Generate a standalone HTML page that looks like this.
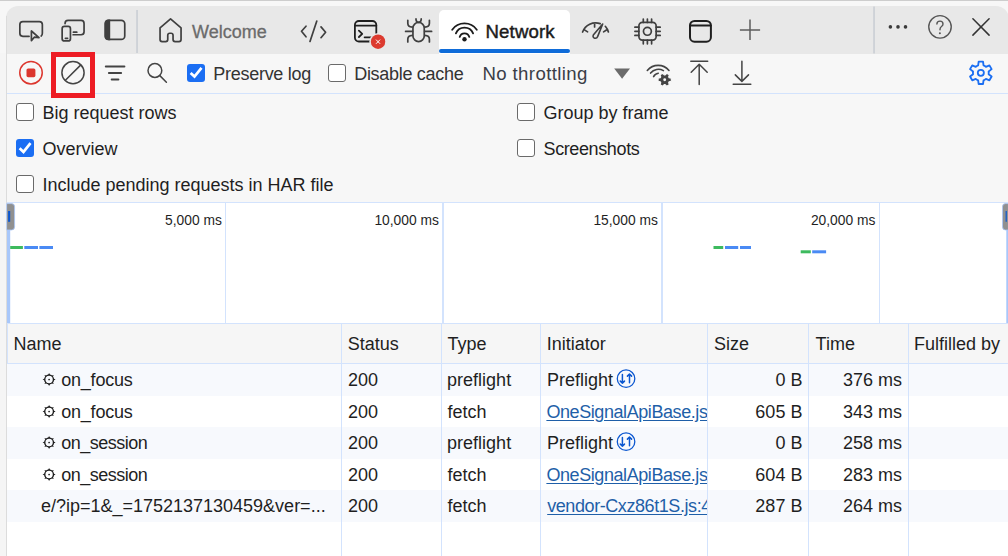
<!DOCTYPE html>
<html><head><meta charset="utf-8">
<style>
*{box-sizing:border-box;margin:0;padding:0}
html,body{width:1008px;height:556px;overflow:hidden;background:#f7f7f7;font-family:"Liberation Sans",sans-serif;position:relative}
.a{position:absolute}
#topline{left:0;top:0;width:1008px;height:1px;background:#cdcdcd}
#gutter{left:0;top:53px;width:7px;height:503px;background:#f5f5f5}
#gshadow{left:5.7px;top:16px;width:1.3px;height:540px;background:#dcdcdc}
#tabbar{left:6.3px;top:6.1px;width:1003px;height:47.5px;background:#e8e8e8;border-radius:12px 13px 0 0}
#nettab{left:439px;top:10px;width:131px;height:43.6px;background:#fff;border-radius:5px 5px 0 0}
#netline{left:439px;top:49px;width:131px;height:3.5px;background:#0f6cd9;border-radius:2px}
#toolbar{left:7px;top:53.6px;width:1001px;height:40.4px;background:#f7f7f7;border-bottom:1px solid #d3e3fd}
#settings{left:7px;top:94px;width:1001px;height:108px;background:#f7f7f7}
#overview{left:7px;top:202px;width:1001px;height:122px;background:#fff;border-top:1px solid #d3e3fd;border-bottom:1px solid #d3e3fd}
#header{left:7px;top:323px;width:1001px;height:41px;background:#f6f6f6;border-top:1px solid #d3e3fd;border-bottom:1px solid #d3e3fd;border-left:1px solid #d3e3fd}
#tbody{left:7px;top:364px;width:1001px;height:192px;background:#fff}
.row{position:absolute;left:7px;width:1001px;height:31.5px}
.odd{background:#f7f9fd}
.t{position:absolute;white-space:nowrap;font-size:18px;line-height:20px;color:#1f1f1f}
.sm{font-size:13.8px;line-height:15px}
.r{text-align:right}
.lnk{color:#1f5fa8;text-decoration:underline;text-underline-offset:2px;letter-spacing:-0.42px}
.cb{position:absolute;width:18px;height:18px;border-radius:3px}
.off{border:1.8px solid #6a6a6a;background:#fff}
.on{background:#1b6ef3}
#ov{position:absolute;left:0;top:0}
</style></head><body>
<div class="a" id="topline"></div>
<div class="a" id="tabbar"></div>
<div class="a" id="nettab"></div>
<div class="a" id="netline"></div>
<div class="a" id="gutter"></div>
<div class="a" id="gshadow"></div>
<div class="a" id="toolbar"></div>
<div class="a" id="settings"></div>
<div class="a" id="overview"></div>
<div class="a" id="header"></div>
<div class="a" id="tbody"></div>
<div class="row odd" style="top:364px;height:32px"></div>
<div class="row odd" style="top:427px;height:31.7px"></div>
<div class="row odd" style="top:490px;height:31.6px"></div>

<!-- tab texts -->
<div class="t" style="left:192px;top:21.8px;color:#6b6b6b;font-size:18px;-webkit-text-stroke:0.3px #6b6b6b">Welcome</div>
<div class="t" style="left:485.5px;top:21.5px;color:#1b1b1b;font-size:18.6px;-webkit-text-stroke:0.45px #1b1b1b;letter-spacing:0.15px">Network</div>

<!-- toolbar texts -->
<div class="cb on" style="left:187px;top:64px"></div>
<div class="t" style="left:213.3px;top:63.75px;color:#333;letter-spacing:-0.28px">Preserve log</div>
<div class="cb off" style="left:328px;top:64.2px"></div>
<div class="t" style="left:354.2px;top:63.75px;color:#333;letter-spacing:-0.3px">Disable cache</div>
<div class="t" style="left:482.4px;top:63.75px;color:#3a3d47;font-size:18.6px;letter-spacing:0.4px">No throttling</div>

<!-- settings -->
<div class="cb off" style="left:16px;top:103.3px"></div>
<div class="t" style="left:42.4px;top:103px">Big request rows</div>
<div class="cb on" style="left:16px;top:139.3px"></div>
<div class="t" style="left:42.4px;top:139px">Overview</div>
<div class="cb off" style="left:16px;top:175.3px"></div>
<div class="t" style="left:42.4px;top:175px">Include pending requests in HAR file</div>
<div class="cb off" style="left:516.8px;top:103.3px"></div>
<div class="t" style="left:543.5px;top:103px">Group by frame</div>
<div class="cb off" style="left:516.8px;top:139.3px"></div>
<div class="t" style="left:543.5px;top:139px;letter-spacing:-0.38px">Screenshots</div>

<!-- overview labels -->
<div class="t sm r" style="right:786.2px;top:213.1px">5,000 ms</div>
<div class="t sm r" style="right:569.2px;top:213.1px">10,000 ms</div>
<div class="t sm r" style="right:350.2px;top:213.1px">15,000 ms</div>
<div class="t sm r" style="right:132.7px;top:213.1px">20,000 ms</div>

<!-- header -->
<div class="t" style="left:13.5px;top:333.5px">Name</div>
<div class="t" style="left:347.8px;top:333.5px">Status</div>
<div class="t" style="left:447.6px;top:333.5px">Type</div>
<div class="t" style="left:546.7px;top:333.5px">Initiator</div>
<div class="t" style="left:713.9px;top:333.5px">Size</div>
<div class="t" style="left:815.6px;top:333.5px">Time</div>
<div class="t" style="left:914px;top:333.5px">Fulfilled by</div>

<!-- rows -->
<div class="t" style="left:61.2px;top:369.6px"><span style="letter-spacing:-0.2px">on_focus</span></div>
<div class="t" style="left:61.2px;top:402.1px"><span style="letter-spacing:-0.2px">on_focus</span></div>
<div class="t" style="left:61.2px;top:432.6px"><span style="letter-spacing:-0.5px">on_session</span></div>
<div class="t" style="left:61.2px;top:465.1px"><span style="letter-spacing:-0.5px">on_session</span></div>
<div class="t" style="left:40.9px;top:495.6px">e/?ip=1&amp;_=1752137130459&amp;ver=...</div>

<div class="t" style="left:348px;top:369.6px">200</div>
<div class="t" style="left:348px;top:402.1px">200</div>
<div class="t" style="left:348px;top:432.6px">200</div>
<div class="t" style="left:348px;top:465.1px">200</div>
<div class="t" style="left:348px;top:495.6px">200</div>

<div class="t" style="left:447.1px;top:369.6px">preflight</div>
<div class="t" style="left:447.6px;top:402.1px">fetch</div>
<div class="t" style="left:447.1px;top:432.6px">preflight</div>
<div class="t" style="left:447.6px;top:465.1px">fetch</div>
<div class="t" style="left:447.6px;top:495.6px">fetch</div>

<div class="a" style="left:540px;top:363px;width:167.5px;height:193px;overflow:hidden">
<div class="t" style="left:7px;top:6.6px">Preflight</div>
<div class="t lnk" style="left:6.4px;top:39.1px">OneSignalApiBase.js:1</div>
<div class="t" style="left:7px;top:69.6px">Preflight</div>
<div class="t lnk" style="left:6.4px;top:102.1px">OneSignalApiBase.js:1</div>
<div class="t lnk" style="left:7.2px;top:132.6px">vendor-Cxz86t1S.js:4</div>
</div>

<div class="t r" style="right:205.6px;top:369.6px">0 B</div>
<div class="t r" style="right:205.6px;top:402.1px">605 B</div>
<div class="t r" style="right:205.6px;top:432.6px">0 B</div>
<div class="t r" style="right:205.6px;top:465.1px">604 B</div>
<div class="t r" style="right:205.6px;top:495.6px">287 B</div>

<div class="t r" style="right:106.1px;top:369.6px">376 ms</div>
<div class="t r" style="right:106.1px;top:402.1px">343 ms</div>
<div class="t r" style="right:106.1px;top:432.6px">258 ms</div>
<div class="t r" style="right:106.1px;top:465.1px">283 ms</div>
<div class="t r" style="right:106.1px;top:495.6px">264 ms</div>
<svg id="ov" width="1008" height="556" viewBox="0 0 1008 556" fill="none" stroke-linecap="round" stroke-linejoin="round">
<rect x="136.3" y="10" width="1.5" height="43" fill="#c8ccd3" stroke="none"/>
<rect x="873.3" y="6.5" width="1.5" height="47" fill="#c8ccd3" stroke="none"/>
<path stroke="#3f3f3f" stroke-width="1.7" d="M 29.1 36.35 H 22.85 Q 19.85 36.35 19.85 33.35 V 24.6 Q 19.85 21.6 22.85 21.6 H 39.35 Q 42.35 21.6 42.35 24.6 V 33.35 Q 42.35 35.3 41.2 36"/>
<path stroke="#3f3f3f" stroke-width="1.7" d="M 31.4 31 L 31.4 40.6 L 34.3 37.2 L 39 37.6 Z"/>
<path stroke="#3f3f3f" stroke-width="1.7" d="M 65.05 23.6 V 23.45 Q 65.05 20.45 68.05 20.45 H 81.05 Q 84.05 20.45 84.05 23.45 V 31.75 Q 84.05 34.75 81.05 34.75 H 73.1"/>
<path stroke="#3f3f3f" stroke-width="1.7" d="M 73.4 32.15 H 76.8 M 65.4 38.3 H 67.6"/>
<rect stroke="#3f3f3f" stroke-width="1.7" x="62.15" y="26.45" width="8.3" height="14.5" rx="2.3"/>
<rect stroke="#3f3f3f" stroke-width="1.7" x="105.35" y="20.35" width="19.4" height="19.1" rx="3.5"/>
<path fill="#3f3f3f" d="M 104.5 23.5 Q 104.5 19.5 108.5 19.5 H 110.2 V 40.3 H 108.5 Q 104.5 40.3 104.5 36.3 Z"/>
<path stroke="#3f3f3f" stroke-width="1.7" d="M 160.05 27.8 L 170.55 18.9 L 181.05 27.8 V 39.6 Q 181.05 41.6 179.05 41.6 H 175.05 Q 173.05 41.6 173.05 39.6 V 35.3 Q 173.05 33.25 171.05 33.25 H 169.75 Q 167.75 33.25 167.75 35.3 V 39.6 Q 167.75 41.6 165.75 41.6 H 162.05 Q 160.05 41.6 160.05 39.6 Z"/>
<path stroke="#3f3f3f" stroke-width="1.7" d="M 306 26.2 L 301.5 31.3 L 306 36.8 M 316.8 21.1 L 310 41.4 M 321 26.9 L 325.6 32.3 L 321 37.7"/>
<rect stroke="#1f1f1f" stroke-width="1.8" x="354.9" y="21" width="21.4" height="20.5" rx="4"/>
<path stroke="#1f1f1f" stroke-width="1.8" d="M 354.9 25.6 H 376.3 M 358.9 30.6 L 362.2 33.8 L 358.9 37 M 364.6 37.3 H 372"/>
<circle cx="378.06" cy="41.7" r="8.8" fill="#e8e8e8" stroke="none"/>
<circle cx="378.06" cy="41.7" r="7.2" fill="#dc3a2f" stroke="none"/>
<path stroke="#fff" stroke-width="1.0" stroke-linecap="butt" d="M 376 39.6 L 380.1 43.8 M 380.1 39.6 L 376 43.8"/>
<path stroke="#3f3f3f" stroke-width="1.7" d="M 412.95 28.1 A 5.65 5.65 0 0 1 424.25 28.1 V 35.9 A 5.65 5.65 0 0 1 412.95 35.9 Z"/>
<path stroke="#3f3f3f" stroke-width="1.7" d="M 416 18.9 V 19.6 Q 416.3 22.3 418.6 22.3 Q 420.9 22.3 421.2 19.6 V 18.9"/>
<path stroke="#3f3f3f" stroke-width="1.7" d="M 407.8 20.3 V 23.3 Q 407.8 27 412.3 27.1 M 429.4 20.3 V 23.3 Q 429.4 27 424.9 27.1 M 405.6 31.4 H 412.5 M 424.7 31.4 H 431.6 M 412.3 35.4 Q 407.8 35.6 407.8 39.2 V 41.9 M 424.9 35.4 Q 429.4 35.6 429.4 39.2 V 41.9"/>
<path stroke="#1b1b1b" stroke-width="1.8" d="M 452.2 29.7 A 15.2 15.2 0 0 1 476.8 29.7 M 455.9 33.3 A 9.3 9.3 0 0 1 473.1 33.3 M 459.7 36.9 A 5 5 0 0 1 469.3 36.9"/>
<circle cx="464.5" cy="39.3" r="2.2" fill="#1b1b1b" stroke="none"/>
<path stroke="#3f3f3f" stroke-width="1.7" d="M 582.6 32 A 13.9 13.9 0 0 1 600.2 23.6 M 605.3 26.3 A 13.9 13.9 0 0 1 608.4 32 M 584.5 29.9 L 587.6 31.9 M 594.6 23.2 V 27 M 606.8 29.8 L 603.6 31.9"/>
<path stroke="#3f3f3f" stroke-width="1.6" d="M 602.7 24 L 593.3 34.9 Q 592.4 37.5 594.7 38.2 Q 596.9 38.6 597.7 36.4 Z"/>
<rect stroke="#3f3f3f" stroke-width="1.7" x="638.9" y="22.45" width="17.25" height="17.6" rx="3.5"/>
<circle stroke="#3f3f3f" stroke-width="1.7" cx="647.4" cy="31.3" r="3.95"/>
<path stroke="#3f3f3f" stroke-width="1.7" d="M 643.3 19 V 22.4 M 643.3 40.1 V 43.8 M 647.4 19 V 22.4 M 647.4 40.1 V 43.8 M 651.6 19 V 22.4 M 651.6 40.1 V 43.8 M 634.9 27.2 H 638.9 M 656.15 27.2 H 660.2 M 634.9 31.3 H 638.9 M 656.15 31.3 H 660.2 M 634.9 35.4 H 638.9 M 656.15 35.4 H 660.2"/>
<rect stroke="#1f1f1f" stroke-width="2" x="690" y="20.9" width="20.9" height="20.8" rx="4.5"/>
<path stroke="#1f1f1f" stroke-width="1.8" d="M 690 25.5 H 710.9"/>
<path stroke="#5c5c5c" stroke-width="1.5" stroke-linecap="butt" d="M 739.9 29.9 H 760.1 M 750 19.6 V 40.1"/>
<circle cx="890.4" cy="26.9" r="1.8" fill="#3a3a3a" stroke="none"/>
<circle cx="898" cy="26.9" r="1.8" fill="#3a3a3a" stroke="none"/>
<circle cx="905.5" cy="26.9" r="1.8" fill="#3a3a3a" stroke="none"/>
<circle cx="940" cy="26.85" r="11.25" stroke="#555" stroke-width="1.4"/>
<path stroke="#555" stroke-width="1.4" d="M 936.9 24 Q 936.9 21.1 940 21.1 Q 943 21.1 943 23.9 Q 943 25.5 941.5 26.5 Q 940 27.5 940 29.2 V 29.8"/>
<circle cx="939.9" cy="33.2" r="1" fill="#555" stroke="none"/>
<path stroke="#333" stroke-width="1.5" d="M 972.9 18.8 L 989.1 35.1 M 989.1 18.8 L 972.9 35.1"/>
<circle cx="31" cy="72.7" r="11.25" stroke="#dc362e" stroke-width="1.5"/>
<rect x="26.5" y="68.5" width="8.9" height="8.7" rx="1.6" fill="#dc362e" stroke="none"/>
<circle cx="73" cy="72.7" r="11.1" stroke="#444" stroke-width="1.5"/>
<path stroke="#444" stroke-width="1.5" d="M 80.6 65.1 L 65.4 80.3"/>
<rect x="53.5" y="54.5" width="39" height="41" stroke="#ed1c24" stroke-width="5" stroke-linejoin="miter"/>
<path stroke="#444" stroke-width="2" d="M 105.8 66.5 H 124.4 M 108.9 73.1 H 121.1 M 111.7 79.4 H 118.4"/>
<circle cx="154.9" cy="70.5" r="6.9" stroke="#444" stroke-width="1.5"/>
<path stroke="#444" stroke-width="1.5" d="M 159.8 75.6 L 166.4 82.3"/>
<path stroke="#fff" stroke-width="2.7" stroke-linecap="butt" stroke-linejoin="miter" d="M 190.6 72.9 L 194.5 76.6 L 201.5 67.8"/>
<path stroke="#fff" stroke-width="2.7" stroke-linecap="butt" stroke-linejoin="miter" d="M 19.6 148.2 L 23.5 151.9 L 30.5 143.1"/>
<path fill="#6b6b6b" stroke="none" d="M 614.2 68.6 H 630 L 622.1 78.8 Z"/>
<path stroke="#444" stroke-width="1.6" d="M 647.3 70.4 A 14.3 14.3 0 0 1 669 70.4 M 650.6 73.1 A 10 10 0 0 1 663.4 70.6 M 653.6 76.6 A 6 6 0 0 1 658.3 73.2"/>
<path fill="#444" stroke="#f7f7f7" stroke-width="1.2" d="M 669.14 77.68 L 671.33 78.22 L 671.33 81.28 L 669.14 81.82 A 4.90 4.90 0 0 1 668.71 82.56 L 669.34 84.72 L 666.69 86.25 L 665.13 84.63 A 4.90 4.90 0 0 1 664.27 84.63 L 662.71 86.25 L 660.06 84.72 L 660.69 82.56 A 4.90 4.90 0 0 1 660.26 81.82 L 658.07 81.28 L 658.07 78.22 L 660.26 77.68 A 4.90 4.90 0 0 1 660.69 76.94 L 660.06 74.78 L 662.71 73.25 L 664.27 74.87 A 4.90 4.90 0 0 1 665.13 74.87 L 666.69 73.25 L 669.34 74.78 L 668.71 76.94 A 4.90 4.90 0 0 1 669.14 77.68 Z"/>
<circle cx="664.7" cy="79.75" r="1.4" fill="#f7f7f7" stroke="none"/>
<path stroke="#444" stroke-width="1.5" d="M 690.8 61.3 H 707.7 M 699.2 64.4 V 84.4 M 691.2 72.2 L 699.2 64.2 L 707.2 72.2"/>
<path stroke="#444" stroke-width="1.5" d="M 741.9 61.2 V 81.2 M 735.3 74.9 L 741.9 81.4 L 748.5 74.9 M 733.2 84.2 H 750.8"/>
<path stroke="#1a6ef2" stroke-width="1.85" d="M 978.14 65.42 L 978.66 61.65 L 983.02 61.65 L 983.54 65.42 A 7.90 7.90 0 0 1 985.92 66.79 L 989.44 65.36 L 991.62 69.13 L 988.62 71.47 A 7.90 7.90 0 0 1 988.62 74.21 L 991.62 76.55 L 989.44 80.32 L 985.92 78.89 A 7.90 7.90 0 0 1 983.54 80.26 L 983.02 84.03 L 978.66 84.03 L 978.14 80.26 A 7.90 7.90 0 0 1 975.76 78.89 L 972.24 80.32 L 970.06 76.55 L 973.06 74.21 A 7.90 7.90 0 0 1 973.06 71.47 L 970.06 69.13 L 972.24 65.36 L 975.76 66.79 A 7.90 7.90 0 0 1 978.14 65.42 Z"/>
<circle cx="980.84" cy="72.84" r="3.05" stroke="#1a6ef2" stroke-width="1.8"/>
<rect x="225" y="203" width="1" height="120" fill="#d3e3fd" stroke="none"/>
<rect x="442" y="203" width="2" height="120" fill="#d3e3fd" stroke="none"/>
<rect x="661" y="203" width="2" height="120" fill="#d3e3fd" stroke="none"/>
<rect x="879" y="203" width="1" height="120" fill="#d3e3fd" stroke="none"/>
<rect x="7" y="229" width="3.2" height="94" fill="#a8c7fa" stroke="none"/>
<rect x="1006.3" y="229" width="1.7" height="94" fill="#a8c7fa" stroke="none"/>
<path fill="#909090" stroke="#a8c7fa" stroke-width="0.8" d="M 7 203.6 H 11.5 Q 14.6 203.6 14.6 206.7 V 226.9 Q 14.6 230 11.5 230 H 7 Z"/>
<rect x="8.1" y="211" width="2.1" height="10.8" fill="#0b57d0" stroke="none"/>
<path fill="#909090" stroke="#a8c7fa" stroke-width="0.8" d="M 1008 203.6 H 1005.6 Q 1002.5 203.6 1002.5 206.7 V 226.9 Q 1002.5 230 1005.6 230 H 1008 Z"/>
<rect x="1005.6" y="211" width="1.2" height="10.8" fill="#0b57d0" stroke="none"/>
<rect x="10.2" y="246" width="12.7" height="3" fill="#3dba5e" stroke="none"/>
<rect x="24.3" y="246" width="13.7" height="3" fill="#4a8af4" stroke="none"/>
<rect x="39.4" y="246" width="13.6" height="3" fill="#4a8af4" stroke="none"/>
<rect x="713.5" y="246" width="9.7" height="3" fill="#3dba5e" stroke="none"/>
<rect x="725" y="246" width="13.2" height="3" fill="#4a8af4" stroke="none"/>
<rect x="740" y="246" width="11.0" height="3" fill="#4a8af4" stroke="none"/>
<rect x="800.7" y="250.3" width="10.1" height="3" fill="#3dba5e" stroke="none"/>
<rect x="812.2" y="250.3" width="13.9" height="3" fill="#4a8af4" stroke="none"/>
<rect x="341" y="324" width="1" height="232" fill="#d3e3fd" stroke="none"/>
<rect x="441" y="324" width="1" height="232" fill="#d3e3fd" stroke="none"/>
<rect x="540" y="324" width="1" height="232" fill="#d3e3fd" stroke="none"/>
<rect x="707" y="324" width="1" height="232" fill="#d3e3fd" stroke="none"/>
<rect x="808" y="324" width="1" height="232" fill="#d3e3fd" stroke="none"/>
<rect x="908" y="324" width="1" height="232" fill="#d3e3fd" stroke="none"/>
<circle cx="49.1" cy="379.5" r="4.35" stroke="#1a1a1a" stroke-width="1.35"/>
<circle cx="49.1" cy="379.5" r="0.85" fill="#1a1a1a" stroke="none"/>
<path fill="#1a1a1a" stroke="none" d="M 50.11 375.12 L 49.10 373.00 L 48.09 375.12 Z M 52.92 377.12 L 53.70 374.90 L 51.48 375.68 Z M 53.48 380.51 L 55.60 379.50 L 53.48 378.49 Z M 51.48 383.32 L 53.70 384.10 L 52.92 381.88 Z M 48.09 383.88 L 49.10 386.00 L 50.11 383.88 Z M 45.28 381.88 L 44.50 384.10 L 46.72 383.32 Z M 44.72 378.49 L 42.60 379.50 L 44.72 380.51 Z M 46.72 375.68 L 44.50 374.90 L 45.28 377.12 Z"/>
<circle cx="49.1" cy="411.5" r="4.35" stroke="#1a1a1a" stroke-width="1.35"/>
<circle cx="49.1" cy="411.5" r="0.85" fill="#1a1a1a" stroke="none"/>
<path fill="#1a1a1a" stroke="none" d="M 50.11 407.12 L 49.10 405.00 L 48.09 407.12 Z M 52.92 409.12 L 53.70 406.90 L 51.48 407.68 Z M 53.48 412.51 L 55.60 411.50 L 53.48 410.49 Z M 51.48 415.32 L 53.70 416.10 L 52.92 413.88 Z M 48.09 415.88 L 49.10 418.00 L 50.11 415.88 Z M 45.28 413.88 L 44.50 416.10 L 46.72 415.32 Z M 44.72 410.49 L 42.60 411.50 L 44.72 412.51 Z M 46.72 407.68 L 44.50 406.90 L 45.28 409.12 Z"/>
<circle cx="49.1" cy="442.5" r="4.35" stroke="#1a1a1a" stroke-width="1.35"/>
<circle cx="49.1" cy="442.5" r="0.85" fill="#1a1a1a" stroke="none"/>
<path fill="#1a1a1a" stroke="none" d="M 50.11 438.12 L 49.10 436.00 L 48.09 438.12 Z M 52.92 440.12 L 53.70 437.90 L 51.48 438.68 Z M 53.48 443.51 L 55.60 442.50 L 53.48 441.49 Z M 51.48 446.32 L 53.70 447.10 L 52.92 444.88 Z M 48.09 446.88 L 49.10 449.00 L 50.11 446.88 Z M 45.28 444.88 L 44.50 447.10 L 46.72 446.32 Z M 44.72 441.49 L 42.60 442.50 L 44.72 443.51 Z M 46.72 438.68 L 44.50 437.90 L 45.28 440.12 Z"/>
<circle cx="49.1" cy="474.5" r="4.35" stroke="#1a1a1a" stroke-width="1.35"/>
<circle cx="49.1" cy="474.5" r="0.85" fill="#1a1a1a" stroke="none"/>
<path fill="#1a1a1a" stroke="none" d="M 50.11 470.12 L 49.10 468.00 L 48.09 470.12 Z M 52.92 472.12 L 53.70 469.90 L 51.48 470.68 Z M 53.48 475.51 L 55.60 474.50 L 53.48 473.49 Z M 51.48 478.32 L 53.70 479.10 L 52.92 476.88 Z M 48.09 478.88 L 49.10 481.00 L 50.11 478.88 Z M 45.28 476.88 L 44.50 479.10 L 46.72 478.32 Z M 44.72 473.49 L 42.60 474.50 L 44.72 475.51 Z M 46.72 470.68 L 44.50 469.90 L 45.28 472.12 Z"/>
<circle cx="626.05" cy="378.65" r="8.75" stroke="#0b57d0" stroke-width="1.3"/>
<path stroke="#0b57d0" stroke-width="1.5" d="M 622.4 374.45 V 383.25 M 620.3 381.15 L 622.4 383.25 L 624.5 381.15 M 629.5 374.05 V 382.85 M 627.4 376.15 L 629.5 374.05 L 631.6 376.15"/>
<circle cx="626.05" cy="441.65" r="8.75" stroke="#0b57d0" stroke-width="1.3"/>
<path stroke="#0b57d0" stroke-width="1.5" d="M 622.4 437.45 V 446.25 M 620.3 444.15 L 622.4 446.25 L 624.5 444.15 M 629.5 437.05 V 445.85 M 627.4 439.15 L 629.5 437.05 L 631.6 439.15"/>
</svg>
</body></html>
